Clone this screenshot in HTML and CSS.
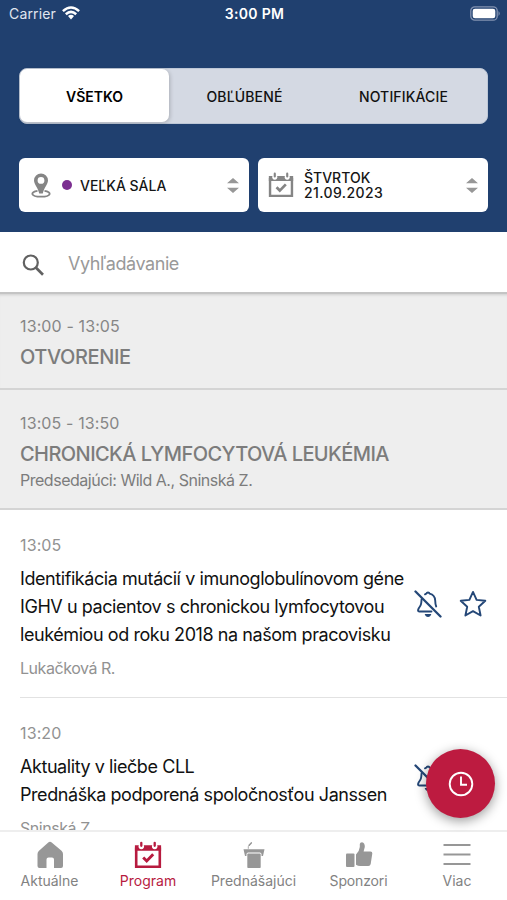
FILE: index.html
```html
<!DOCTYPE html>
<html lang="sk">
<head>
<meta charset="utf-8">
<title>Program</title>
<link rel="stylesheet" href="styles.css">
</head>
<body>
<svg width="0" height="0" class="defs" aria-hidden="true">
  <symbol id="calendar" viewBox="0 0 28 28">
    <path d="M2.200 6.500V25.700H25.800V6.500" fill="none" stroke="currentColor" stroke-width="2.600"/>
    <path d="M.9 4.300H4.800A2.800 2.800 0 1 0 9.800 4.300H18.200A2.800 2.800 0 1 0 23.200 4.300H27.100V9.800H.9Z" fill="currentColor"/>
    <path d="M7.300 1.800V4.800M20.700 1.800V4.800" stroke="currentColor" stroke-width="2.300" stroke-linecap="round"/>
    <path d="M9.200 16.500L12.700 20L19.200 13.300" fill="none" stroke="currentColor" stroke-width="2.900"/>
  </symbol>
  <symbol id="bell-off" viewBox="0 0 28 28">
    <g fill="none" stroke="currentColor" stroke-width="1.900" stroke-linecap="round" stroke-linejoin="round">
      <path d="M11 4.300L12.300 3.700A1.800 1.800 0 0 1 15.700 3.700C19.600 4.700 21 7.200 21.200 10.500Q21.300 14.500 22.200 16.500"/>
      <path d="M7.600 9.200C7.200 15 6.800 15.500 4.900 18Q3 21.500 5.300 21.500H17.500"/>
    </g>
    <path d="M10.700 24H17.300Q16.500 27 14 27T10.700 24Z" fill="currentColor"/>
    <path d="M1.500 1.500L26.500 26.500" stroke="currentColor" stroke-width="2.300" stroke-linecap="round"/>
  </symbol>
</svg>
<div class="app">
  <header class="header">
    <div class="status">
      <div class="carrier"><span>Carrier</span>
        <svg class="wifi" viewBox="0 0 18 14"><g fill="none" stroke="currentColor" stroke-width="2.500"><path d="M.9 5.100Q9-2.200 17.100 5.100"/><path d="M3.800 8.200Q9 3.600 14.200 8.200"/></g><path d="M6 10.100Q9 7.600 12 10.100L9 13.400Z" fill="currentColor"/></svg>
      </div>
      <div class="clock">3:00 PM</div>
      <svg class="battery" viewBox="0 0 31 15"><rect x=".8" y=".8" width="26.400" height="13.400" rx="4" fill="none" stroke="#8292b1" stroke-width="1.300"/><rect x="2.700" y="2.700" width="22.600" height="9.600" rx="2.300" fill="#fff"/><path d="M28.500 5Q31 7.500 28.500 10Z" fill="#8292b1"/></svg>
    </div>
    <nav class="segments">
      <div class="segment active"><span>VŠETKO</span></div>
      <div class="segment"><span>OBĽÚBENÉ</span></div>
      <div class="segment last"><span>NOTIFIKÁCIE</span></div>
    </nav>
    <div class="selects">
      <div class="select">
        <svg class="pin" viewBox="0 0 20 25"><path fill="currentColor" fill-rule="evenodd" d="M10 .4A7 7 0 0 0 3 7.400C3 11 7 14.500 8.200 20.500H11.800C13 14.500 17 11 17 7.400A7 7 0 0 0 10 .4ZM10 4A3.400 3.400 0 1 1 10 10.800A3.400 3.400 0 0 1 10 4Z"/><path d="M6.500 17.900C-1 19-.7 23.700 10 23.700S21 19 13.500 17.900" fill="none" stroke="currentColor" stroke-width="1.800"/></svg>
        <i class="dot"></i><span class="value">VEĽKÁ SÁLA</span>
        <svg class="sort" viewBox="0 0 12 15"><path d="M0 5.300L6 0L12 5.300ZM0 9.700L6 15L12 9.700Z" fill="currentColor"/></svg>
      </div>
      <div class="select">
        <svg class="calendar"><use href="#calendar"/></svg>
        <span class="value">ŠTVRTOK<br><b>21.09.2023</b></span>
        <svg class="sort" viewBox="0 0 12 15"><path d="M0 5.300L6 0L12 5.300ZM0 9.700L6 15L12 9.700Z" fill="currentColor"/></svg>
      </div>
    </div>
  </header>
  <div class="search">
    <svg viewBox="0 0 22 22"><circle cx="8.800" cy="8.500" r="7" fill="none" stroke="currentColor" stroke-width="2.200"/><path d="M13.800 13.500L21 20.700" stroke="currentColor" stroke-width="2.700"/></svg>
    <span>Vyhľadávanie</span>
  </div>
  <main class="list">
    <section class="block first">
      <div class="time">13:00 - 13:05</div>
      <h2 class="open">OTVORENIE</h2>
    </section>
    <section class="block chaired">
      <div class="time">13:05 - 13:50</div>
      <h2>CHRONICKÁ LYMFOCYTOVÁ LEUKÉMIA</h2>
      <div class="chairs">Predsedajúci: Wild A., Sninská Z.</div>
    </section>
    <article class="talk">
      <div class="text">
        <div class="time">13:05</div>
        <h3>Identifikácia mutácií v imunoglobulínovom géne<br>IGHV u pacientov s chronickou lymfocytovou<br>leukémiou od roku 2018 na našom pracovisku</h3>
        <div class="author">Lukačková R.</div>
      </div>
      <div class="actions">
        <svg><use href="#bell-off"/></svg>
        <svg viewBox="0 0 28 28"><path d="M14 1.900L17.600 9.900L26.300 10.800L19.800 16.700L21.600 25.500L14 21.100L6.400 25.500L8.200 16.700L1.700 10.800L10.400 9.900Z" fill="none" stroke="currentColor" stroke-width="1.900" stroke-linejoin="round"/></svg>
      </div>
    </article>
    <article class="talk second">
      <div class="text">
        <div class="time">13:20</div>
        <h3>Aktuality v liečbe CLL<br>Prednáška podporená spoločnosťou Janssen</h3>
        <div class="author">Sninská Z.</div>
      </div>
      <div class="actions"><svg><use href="#bell-off"/></svg></div>
    </article>
  </main>
  <nav class="tabs">
    <div class="tab"><svg viewBox="0 0 28 28"><path d="M14 .8Q15 .8 16 1.700L25.500 9.700Q27 11 27 13V25Q27 27 25 27H18V18.500Q18 16.500 16 16.500H12.500Q10.500 16.500 10.500 18.500V27H3.500Q1.500 27 1.500 25V13Q1.500 11 3 9.700L12 1.700Q13 .8 14 .8Z" fill="currentColor"/></svg><span>Aktuálne</span></div>
    <div class="tab program"><svg><use href="#calendar"/></svg><span>Program</span></div>
    <div class="tab"><svg viewBox="0 0 28 28"><path d="M3.500 8.200H24.500L23 15H21.500V13.300Q21.500 11.600 19.800 11.600H8.200Q6.500 11.600 6.500 13.300V15H5Z" fill="currentColor"/><rect x="7.300" y="12.600" width="13.400" height="14.400" rx=".8" fill="currentColor"/><path d="M8.300 7.800V5.600L10 3.800" fill="none" stroke="currentColor" stroke-width=".8"/><path d="M9.100 4.300L11.300 1.900" stroke="currentColor" stroke-width="1.500" stroke-linecap="round"/></svg><span>Prednášajúci</span></div>
    <div class="tab sponsors"><svg viewBox="0 0 28 28"><rect x="1" y="12.500" width="8.500" height="13.500" rx="1" fill="currentColor"/><path d="M11 13.500Q14.500 10 14.800 6V3Q15 1.300 17 1.300Q20 2 19.800 6L18.600 10.500H25.500Q27.500 10.500 27.300 12.500L25.700 23Q25.300 25 23.300 25H15Q13 25 11 23.800Z" fill="currentColor"/></svg><span>Sponzori</span></div>
    <div class="tab"><svg viewBox="0 0 28 28"><path d="M.5 4H27.500M.5 13.500H27.500M.5 23H27.500" stroke="currentColor" stroke-width="2.200"/></svg><span>Viac</span></div>
  </nav>
  <div class="fab"><svg viewBox="0 0 26 26"><circle cx="13" cy="13" r="11.300" fill="none" stroke="currentColor" stroke-width="1.900"/><path d="M13 5.500V13.700H19" fill="none" stroke="currentColor" stroke-width="1.900"/></svg></div>
</div>
</body>
</html>
```
FILE: styles.css
```css
* { box-sizing: border-box; }
body { margin: 0; font-family: Inter, "Liberation Sans", sans-serif; background: #fff; color: #161616; }
svg { display: block; flex: none; }
.defs { position: absolute; }
.app { width: 507px; height: 900px; position: relative; display: flex; flex-direction: column; overflow: hidden; }
.app span { white-space: nowrap; }
.header { flex: none; height: 232px; background: #20406f; padding: 0 19px; }
.status { height: 28px; margin: 0 -13px 40px -10px; display: grid; grid-template-columns: 1fr auto 1fr; align-items: center; color: #fff; font-size: 14px; line-height: 28px; }
.carrier { display: flex; align-items: center; gap: 6px; color: #e0e6ef; letter-spacing: .15px; }
.wifi { width: 18px; height: 14px; color: #fff; margin-top: -2px; }
.clock { font-weight: 600; letter-spacing: .3px; margin-left: -1px; }
.battery { width: 31px; height: 15px; justify-self: end; margin-top: -1px; }
.segments { height: 56px; border-radius: 8px; background: #d4d9e3; display: flex; font-size: 14px; font-weight: 500; letter-spacing: .15px; color: #111; border: 1px solid #bdc7d6; }
.segment { flex: 0 0 151px; display: flex; align-items: center; justify-content: center; }
.segment.last { flex: 1; }
.active { flex-basis: 149px; background: #fff; border-radius: 7px; font-weight: 600; letter-spacing: 0; color: #000; box-shadow: 1px 1px 4px #0003; margin-bottom: 1px; padding-top: 1px; }
.selects { display: flex; gap: 9px; margin-top: 34px; }
.select { flex: 0 0 230px; height: 54px; background: #fff; border-radius: 6px; display: flex; align-items: center; padding: 0 10px 0 12px; }
.select + .select { padding-left: 10px; }
.pin { width: 20px; height: 25px; color: #858585; }
.dot { width: 10px; height: 10px; border-radius: 50%; background: #7c2f91; margin: 0 8px 0 11px; }
.value { font-size: 14px; font-weight: 500; line-height: 15px; }
.value b { font-weight: 500; letter-spacing: .4px; }
.calendar { width: 26px; height: 26px; color: #858585; margin-right: 10px; }
.sort { width: 12px; height: 15px; color: #979797; margin-left: auto; }
.search { flex: none; height: 62px; border-bottom: 2px solid #c4c4c4; display: flex; align-items: center; gap: 24px; padding: 3px 22px 0; font-size: 18px; letter-spacing: -.42px; color: #999; }
.search svg { width: 22px; height: 22px; color: #616161; margin-top: 2px; }
.list { flex: 1; min-height: 0; overflow: hidden; }
.block { height: 96px; background: #eee; border-bottom: 2px solid #d4d4d4; padding: 22px 20px 0; color: #7c7c7c; }
.first { box-shadow: inset 0 3px 3px -2px #0002; }
.chaired { height: 120px; padding-top: 23px; }
.time { font-size: 16px; line-height: 20px; letter-spacing: .12px; color: #868686; }
h2 { margin: 7px 0 0; font-size: 20px; line-height: 28px; font-weight: 500; letter-spacing: -.57px; white-space: nowrap; }
h2.open { letter-spacing: -.4px; }
.chairs { font-size: 16px; line-height: 20px; margin: 2px 0 0; letter-spacing: -.48px; }
.talk { margin-left: 20px; height: 188px; padding: 25px 20px 0 0; border-bottom: 1px solid #e2e2e2; display: flex; justify-content: space-between; }
.talk .time, .author { color: #929292; }
h3 { margin: 10px 0 0; font-size: 18px; line-height: 28px; font-weight: 400; letter-spacing: -.43px; color: #111; white-space: nowrap; }
.author { font-size: 16px; line-height: 20px; margin: 9px 0 0; letter-spacing: -.45px; }
.actions { display: flex; gap: 17px; height: 28px; margin-top: 55px; color: #244777; }
.actions svg { width: 28px; height: 28px; }
.second .actions { width: 73px; margin-top: 41px; }
.tabs { flex: none; height: 70px; background: #fff; border-top: 2px solid #eee; display: grid; grid-template-columns: 99px 98px 113px 97px 100px; padding-top: 9px; font-size: 14px; line-height: 18px; color: #828282; }
.tab { display: flex; flex-direction: column; align-items: center; gap: 3px; }
.tab svg { width: 28px; height: 28px; color: #979797; }
.program, .program svg { color: #b71b3f; }
.sponsors { letter-spacing: -.15px; }
.fab { position: absolute; left: 426px; top: 749px; width: 69px; height: 69px; border-radius: 50%; background: #bd1b40; box-shadow: 0 3px 12px #0006; display: flex; align-items: center; justify-content: center; color: #fff; }
.fab svg { width: 26px; height: 26px; }
```
